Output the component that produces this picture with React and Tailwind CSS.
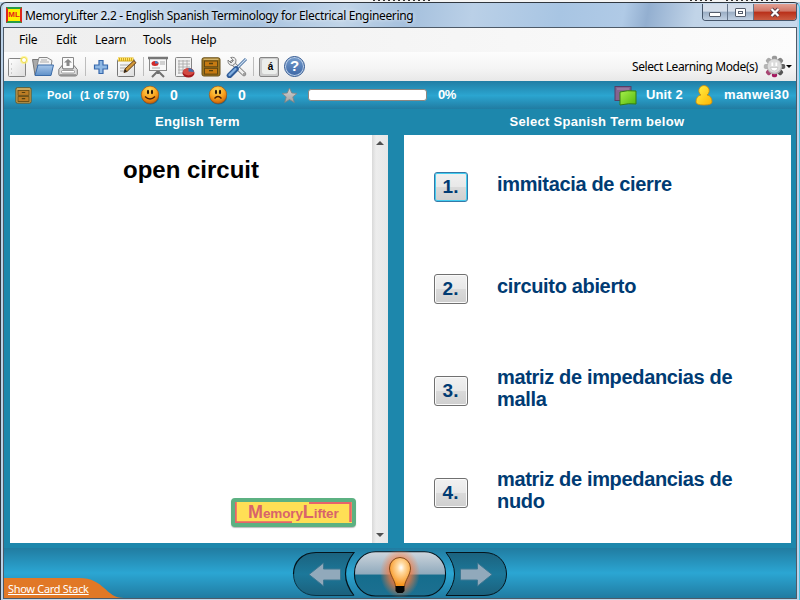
import React from 'react';

const UI = "font-['Noto_Sans',sans-serif]";
const ARIAL = "font-['Liberation_Sans',Arial,sans-serif]";

function Defs() {
  return (
    <svg width="0" height="0" className="absolute" aria-hidden="true">
      <defs>
        <linearGradient id="paper" x1="0" y1="0" x2="1" y2="1"><stop offset="0" stopColor="#fff" /><stop offset="1" stopColor="#ddd" /></linearGradient>
        <linearGradient id="folder" x1="0" y1="0" x2="0" y2="1"><stop offset="0" stopColor="#a9c8ea" /><stop offset="1" stopColor="#5f90c8" /></linearGradient>
        <radialGradient id="face" cx=".45" cy=".25" r=".8"><stop offset="0" stopColor="#ffdf60" /><stop offset=".55" stopColor="#f9a01c" /><stop offset="1" stopColor="#c25a08" /></radialGradient>
        <linearGradient id="star" x1="0" y1="0" x2="0" y2="1"><stop offset="0" stopColor="#d6d6d6" /><stop offset="1" stopColor="#a2a2a2" /></linearGradient>
        <linearGradient id="user" x1="0" y1="0" x2="1" y2="1"><stop offset="0" stopColor="#fff34a" /><stop offset="1" stopColor="#ffb400" /></linearGradient>
        <linearGradient id="green" x1="0" y1="0" x2="1" y2="1"><stop offset="0" stopColor="#a8f04c" /><stop offset="1" stopColor="#53b80c" /></linearGradient>
        <linearGradient id="navSide" x1="0" y1="0" x2="0" y2="1"><stop offset="0" stopColor="#1b627e" /><stop offset=".5" stopColor="#1c789a" /><stop offset="1" stopColor="#1b607c" /></linearGradient>
        <linearGradient id="navMid" x1="0" y1="0" x2="0" y2="1"><stop offset="0" stopColor="#ced6dd" /><stop offset=".51" stopColor="#8fa9bc" /><stop offset=".52" stopColor="#156d8d" /><stop offset="1" stopColor="#1c7091" /></linearGradient>
        <radialGradient id="bulb" cx=".55" cy=".35" r=".6"><stop offset="0" stopColor="#fff" /><stop offset=".3" stopColor="#ffd9a0" /><stop offset="1" stopColor="#f8941d" /></radialGradient>
        <radialGradient id="glow"><stop offset="0" stopColor="#ff7a2a" /><stop offset=".55" stopColor="#ff7a3a" stopOpacity=".7" /><stop offset="1" stopColor="#ff7a3a" stopOpacity="0" /></radialGradient>
      </defs>
    </svg>
  );
}

function Svg({ w, h, className = '', children }) {
  return <svg width={w} height={h} viewBox={`0 0 ${w} ${h}`} className={`block shrink-0 ${className}`}>{children}</svg>;
}

function NewIcon() {
  return (
    <Svg w={22} h={22}>
      <rect x=".5" y="2.500" width="17" height="18" rx="1" fill="url(#paper)" stroke="#858585" />
      <path d="M3 8h1M3 13h1M3 17h1" stroke="#aaa" />
      <circle cx="16" cy="4" r="4" fill="#fff36a" opacity=".65" /><circle cx="16" cy="4" r="2.500" fill="#fff" stroke="#eedb4a" />
    </Svg>
  );
}
function FolderIcon() {
  return (
    <Svg w={24} h={22}>
      <path d="M3 19L.5 3.500h6l2 2H17v13z" fill="#aaa" stroke="#777" />
      <path d="M5 10L7 1.500h8l5 3-1 6z" fill="#f4f4f4" stroke="#888" /><path d="M9 4h6M8 6h9" stroke="#aaa" />
      <path d="M3 19.500L6 9h15.500l-2.500 10.500z" fill="url(#folder)" stroke="#3c6ca8" />
    </Svg>
  );
}
function PrinterIcon() {
  return (
    <Svg w={22} h={22}>
      <path d="M4.500 13V1.500h11V13z" fill="#fafafa" stroke="#8a8a8a" />
      <path d="M10 3l4 3.500h-2.500V10h-3V6.500H6z" fill="#888" />
      <path d="M4 9.500L.8 13.500V18q0 2 2 2h14.500q2 0 2-2v-4.500L16 9.500l-1 3.500H5z" fill="#ddd" stroke="#7c7c7c" />
      <rect x="3.500" y="14.500" width="13" height="2.500" rx="1" fill="#fff" stroke="#888" strokeWidth=".8" />
      <path d="M2 19h16" stroke="#888" strokeWidth="1.500" />
    </Svg>
  );
}
function PlusIcon() {
  return <Svg w={16} h={16}><path d="M6 1.500h4V6h4.500v4H10v4.500H6V10H1.500V6H6z" fill="#8fb8e4" stroke="#3768ac" strokeWidth="1.200" /></Svg>;
}
function NoteIcon() {
  return (
    <Svg w={22} h={23}>
      <rect x="1.500" y="4.500" width="17" height="17" rx="1" fill="url(#paper)" stroke="#777" />
      <path d="M4 10h10M4 13h8M4 16h6" stroke="#aaa" />
      <path d="M2 4.500h15.500" stroke="#d5a91c" strokeWidth="4" /><path d="M2 4h16" stroke="#ffe56a" strokeWidth="3" strokeDasharray="1 1" />
      <path d="M8 17.500l1-3.500 9-8.500 2 2.200-9 8.800z" fill="#d39838" stroke="#5e3b14" /><path d="M8 17.500l1.200-3.200 1.800 1.900z" fill="#222" />
    </Svg>
  );
}
function BoardIcon() {
  return (
    <Svg w={22} h={22}>
      <path d="M11 15l-6 6M11 15l6 6M11 14v4" stroke="#707070" strokeWidth="2" fill="none" />
      <rect x="2.500" y="2.500" width="17" height="12" fill="#f8f8f8" stroke="#888" /><path d="M1 2h20" stroke="#777" strokeWidth="2.500" />
      <ellipse cx="8" cy="7.500" rx="3.500" ry="2.500" fill="#d12a2a" /><path d="M8 7.500V5q3.500 0 3.500 2.500z" fill="#4d80c2" />
      <path d="M13 6h5M13 8h5M5 12h8" stroke="#aaa" />
    </Svg>
  );
}
function ReportIcon() {
  return (
    <Svg w={22} h={22}>
      <rect x="1.500" y="1.500" width="16" height="19" rx="1" fill="#f2f2f2" stroke="#858585" />
      <path d="M4 5h12M4 8h12M4 11h12M4 14h7M4 17h6M5 4v14M9 4v14M13 4v8" stroke="#aaa" strokeWidth=".9" />
      <ellipse cx="14.500" cy="17" rx="6" ry="4.500" fill="#a4181c" /><ellipse cx="14.500" cy="15.700" rx="5.500" ry="3.700" fill="#d34a42" />
      <path d="M14.500 15.500V12q5 .5 5.500 4z" fill="#416fa9" />
    </Svg>
  );
}
function DrawerIcon({ size = 20, muted }) {
  const a = muted ? '#bd7d25' : '#c67a12';
  return (
    <svg width={size} height={size} viewBox="0 0 20 20" className="block shrink-0">
      <rect x="1" y=".8" width="18" height="18.200" rx="1.800" fill={muted ? '#c6a257' : '#9c7420'} stroke="#674f19" />
      <path d="M2.500 2.300h15" stroke="#d3b46c" strokeWidth="1.500" />
      <rect x="3.500" y="4" width="13" height="5.800" fill={a} stroke="#614712" />
      <rect x="3.500" y="11.300" width="13" height="5.800" fill={a} stroke="#614712" />
      <path d="M8 6.500h4M8 13.700h4" stroke="#56400f" strokeWidth="1.300" />
    </svg>
  );
}
function ToolsIcon() {
  return (
    <Svg w={22} h={22}>
      <path d="M6 6.500L18 18" stroke="#777" strokeWidth="4.500" strokeLinecap="round" /><path d="M6 6.500L18 18" stroke="#efefef" strokeWidth="2.700" strokeLinecap="round" />
      <path d="M2 4l3 3 2.500-2.500L4.700 1.500Q9 .5 10 4T6.500 9.500Q1.500 9 2 4z" fill="#eee" stroke="#777" strokeWidth=".9" />
      <circle cx="18" cy="18" r="1" fill="#888" />
      <path d="M20 3L10 13" stroke="#426a9c" strokeWidth="3" /><path d="M20 3L10 13" stroke="#c8dcf1" strokeWidth="1.200" />
      <path d="M10 13l-6.500 6.500" stroke="#2f5c99" strokeWidth="5.500" strokeLinecap="round" /><path d="M9.500 13l-6 6" stroke="#80aee0" strokeWidth="2.300" strokeLinecap="round" />
    </Svg>
  );
}
function Smiley({ sad }) {
  return (
    <Svg w={20} h={20}>
      <ellipse cx="10.500" cy="12" rx="8.500" ry="7.500" fill="#174e66" opacity=".55" />
      <circle cx="10" cy="9.800" r="8.700" fill="url(#face)" stroke="#a14c09" strokeWidth=".6" />
      <ellipse cx="8" cy="7" rx="1.100" ry="2.300" fill="#2a1608" /><ellipse cx="12" cy="7" rx="1.100" ry="2.300" fill="#2a1608" />
      {sad
        ? <path d="M6.500 13.500q3.500-4 7 0" stroke="#4a2008" strokeWidth="1.300" fill="none" />
        : <path d="M5 11.500q5 5 10 0" stroke="#4a2008" strokeWidth="1.400" fill="none" />}
    </Svg>
  );
}
const gearTeeth = [
  [0, '#9a9a9a'], [45, '#858585'], [90, '#606060'], [135, '#555'],
  [180, '#a3195f'], [225, '#a84572'], [270, '#b4b4b4'], [315, '#aaa'],
];
function GearFace() {
  return (
    <Svg w={23} h={23}>
      {gearTeeth.map(([t, color]) => (
        <rect key={t} x="8.900" y=".8" width="5.200" height="6" rx="1.800" transform={`rotate(${t} 11.500 11.500)`} fill={color} />
      ))}
      <circle cx="11.500" cy="11.500" r="7.700" fill="#b3b3b3" /><circle cx="11.300" cy="11" r="6.700" fill="#dcdcdc" />
      <path d="M9.300 7.500v3.500M13.300 7.500v3.500" stroke="#fff" strokeWidth="1.800" />
      <path d="M7.500 12.500h7.500q-.5 3.500-3.700 3.500t-3.800-3.500z" fill="#fff" stroke="#b9b9b9" strokeWidth=".6" />
    </Svg>
  );
}

function Nav() {
  return (
    <Svg w={216} h={47}>
      <path d="M62 1.500H24C10 1.500 1.500 11 1.500 23S10 44.500 24 44.500h38Q45 23 62 1.500z" fill="url(#navSide)" />
      <path d="M1.500 23C1.500 11 10 1.500 24 1.500H62Q45 23 62 44.500" fill="none" stroke="#04141c" strokeWidth="1.200" />
      <path d="M1.500 23C1.500 35 10 44.500 24 44.500h38" fill="none" stroke="#0b3344" />
      <path d="M154 1.500h38C206 1.500 214.500 11 214.500 23S206 44.500 192 44.500h-38Q171 23 154 1.500z" fill="url(#navSide)" stroke="#04141c" strokeWidth="1" />
      <rect x="62.500" y=".7" width="91" height="44.300" rx="21" fill="url(#navMid)" stroke="#04141c" strokeWidth="1.100" />
      <ellipse cx="108" cy="22" rx="20" ry="25" fill="url(#glow)" />
      <path d="M103.500 35.500C103 29 97.500 24 97.500 17a10.500 10.500 0 0 1 21 0c0 7-5.500 12-6 18.500z" fill="url(#bulb)" stroke="#80471c" strokeWidth="1" />
      <path d="M103.500 35h9v5l-2 2h-5l-2-2z" fill="#050505" />
      <path d="M17 23.500L31.500 12v6H48.500v11H31.500v6z" fill="#91a9bb" stroke="#3c7893" />
      <path d="M200 23.500L185.500 12v6H168.500v11h17v6z" fill="#91a9bb" stroke="#3c7893" />
    </Svg>
  );
}

function WindowButtons() {
  return (
    <div className="mt-px ml-auto flex h-[17px] w-[95px] overflow-hidden rounded-b-[4px] border border-t-0 border-[#46566b]">
      <div className="flex w-[25px] items-center justify-center border-r border-[#65758a] bg-[linear-gradient(#d5deea_45%,#9aadc4_50%,#c2d1e3)]"><span className="mt-1 h-[5px] w-[12px] rounded-[1px] border border-[#555d6c] bg-white" /></div>
      <div className="flex w-[26px] items-center justify-center border-r border-[#65758a] bg-[linear-gradient(#d5deea_45%,#9aadc4_50%,#c2d1e3)]"><span className="flex h-[9px] w-[11px] items-center justify-center rounded-[1px] border border-[#555d6c] bg-white"><span className="h-[3px] w-[5px] border border-[#555d6c]" /></span></div>
      <div className="flex flex-1 items-center justify-center bg-[linear-gradient(#e3a194,#d07666_45%,#b92f18_50%,#ca5c42)]">
        <Svg w={12} h={11}><path d="M2.500 2l7 7M9.500 2l-7 7" stroke="#593c45" strokeWidth="4" /><path d="M2.500 2l7 7M9.500 2l-7 7" stroke="#fff" strokeWidth="2.200" /></Svg>
      </div>
    </div>
  );
}

function Logo() {
  return (
    <div className="relative mr-[16px] flex h-[29px] w-[125px] items-baseline self-end rounded-[4px] border-[4px] border-[#5cb182] bg-[#ffdf55] pl-[13px] font-bold text-[#d8646b] shadow-[0_1px_1px_#bbb]">
      <svg width="117" height="21" className="absolute top-0 left-0"><path d="M.5 0V20.500H57M74 .8h41.500V20" fill="none" stroke="#e8636a" strokeWidth="2.500" /></svg>
      <span className="text-[18px] leading-[21px]">M</span>
      <span className="text-[13.5px] leading-[16px] tracking-[-0.15px]">emory</span>
      <span className="text-[18px] leading-[21px]">L</span>
      <span className="text-[13.5px] leading-[16px] tracking-[-0.15px]">ifter</span>
    </div>
  );
}

function Cell({ w, children, className = '' }) {
  return <div className={`flex h-full shrink-0 items-center ${w} ${className}`}>{children}</div>;
}

const answers = [
  { n: '1.', lines: ['immitacia de cierre'], active: true },
  { n: '2.', lines: ['circuito abierto'] },
  { n: '3.', lines: ['matriz de impedancias de', 'malla'] },
  { n: '4.', lines: ['matriz de impedancias de', 'nudo'] },
];

export default function App() {
  return (
    <div className={`flex h-[600px] w-[800px] flex-col overflow-hidden bg-[#bcd2e8] text-black ${UI}`}>
      <Defs />
      <div className="flex h-[2px] shrink-0 bg-[#f4f4f4]">
        <i className="ml-[373px] h-px w-[57px] bg-[repeating-linear-gradient(90deg,#333_0_2px,#eee_2px_5px)]" />
        <i className="ml-[260px] h-px w-[23px] bg-[repeating-linear-gradient(90deg,#333_0_2px,#eee_2px_5px)]" />
        <i className="ml-[13px] h-px w-[54px] bg-[repeating-linear-gradient(90deg,#333_0_2px,#eee_2px_5px)]" />
      </div>
      <div className="flex min-h-0 flex-1 flex-col rounded-t-[6px] border-x border-t border-[#30373f] border-r-[#43c5e8] bg-[#bcd2e8] px-[2px]">
        <header className="flex h-[24px] shrink-0 items-start rounded-t-[5px] bg-[linear-gradient(100deg,#d8e4f1_0%,#cbdcee_13%,#a9c4e0_32%,#c0d4e8_43%,#a5c0dd_51%,#bad0e7_59%,#a8c5e3_70%,#b0cae6_78%,#93afd0_81%,#c1d4e8_87%,#c7d9ec_100%)] pl-[3px]">
          <div className={`mt-[4px] flex h-4 w-4 items-center justify-center border-2 border-t-[#269b46] border-r-[#dd261b] border-b-[#269b46] border-l-[#dd261b] bg-[#fff000] text-[8px] font-bold text-[#e51d18] ${ARIAL}`}>ML</div>
          <div className="ml-[3px] h-[24px] whitespace-nowrap text-[12px] leading-[25px] tracking-[-0.34px] [text-shadow:0_0_4px_#fff]">MemoryLifter 2.2 - English Spanish Terminology for Electrical Engineering</div>
          <WindowButtons />
        </header>
        <div className="flex min-h-0 flex-1 flex-col border border-[#4d5a68]">
          <nav className="flex h-[24px] shrink-0 items-center bg-[linear-gradient(90deg,#eeeeee,#fcfcfc)] pl-[15px] text-[12px] tracking-[-0.2px]">
            <Cell w="w-[37px]">File</Cell><Cell w="w-[39px]">Edit</Cell><Cell w="w-[48px]">Learn</Cell><Cell w="w-[48px]">Tools</Cell><Cell w="w-[40px]">Help</Cell>
          </nav>
          <div className="flex h-[29px] shrink-0 items-center bg-[linear-gradient(#fdfdfd,#f5f5f5_55%,#e8e8e8)] pl-[4px]">
            <Cell w="w-[24px]"><NewIcon /></Cell>
            <Cell w="w-[26px]"><FolderIcon /></Cell>
            <Cell w="w-[27px]"><PrinterIcon /></Cell>
            <Cell w="w-[8px]"><i className="h-[19px] w-px bg-[#bdbdbd]" /></Cell>
            <Cell w="w-[23px]"><PlusIcon /></Cell>
            <Cell w="w-[27px]"><NoteIcon /></Cell>
            <Cell w="w-[4px]"><i className="h-[19px] w-px bg-[#bdbdbd]" /></Cell>
            <Cell w="w-[27px]"><BoardIcon /></Cell>
            <Cell w="w-[27px]"><ReportIcon /></Cell>
            <Cell w="w-[25px]"><DrawerIcon /></Cell>
            <Cell w="w-[27px]"><ToolsIcon /></Cell>
            <Cell w="w-[6px]"><i className="h-[19px] w-px bg-[#bdbdbd]" /></Cell>
            <Cell w="w-[25px]"><span className="flex h-[20px] w-[20px] items-center justify-center rounded-[2px] border border-[#858585] bg-[#ccc]"><span className={`flex h-[15px] w-[15px] items-center justify-center rounded-[2px] bg-[#eceeec] pl-[3px] text-[10px] font-bold ${ARIAL}`}>á</span></span></Cell>
            <Cell w="w-[21px]"><span className="flex h-[21px] w-[21px] items-center justify-center rounded-full border border-[#2f5790] bg-[#b7cbe6]"><span className={`flex h-[17px] w-[17px] items-center justify-center rounded-full bg-[linear-gradient(#7299ca,#3f69a8)] text-[15px] font-bold text-white ${ARIAL}`}>?</span></span></Cell>
            <div className="ml-auto flex items-center pr-[4px]">
              <span className="w-[131px] whitespace-nowrap text-[12px] tracking-[-0.4px]">Select Learning Mode(s)</span>
              <GearFace />
              <span className="h-0 w-0 border-x-[3px] border-t-[3px] border-x-transparent border-t-black" />
            </div>
          </div>
          <div className={`flex h-[28px] shrink-0 items-center bg-[linear-gradient(#217da4,#2ba5d0_52%,#217ca2)] pl-[11px] text-[12px] font-bold text-white ${ARIAL}`}>
            <Cell w="w-[32px]"><DrawerIcon size={17} muted /></Cell>
            <Cell w="w-[33px]" className="text-[11px] tracking-[0.2px]">Pool</Cell>
            <Cell w="w-[60px]" className="text-[11px] tracking-[0.1px] whitespace-nowrap">(1 of 570)</Cell>
            <Cell w="w-[30px]"><Smiley /></Cell>
            <Cell w="w-[38px]" className="text-[14px]">0</Cell>
            <Cell w="w-[30px]"><Smiley sad /></Cell>
            <Cell w="w-[43px]" className="text-[14px]">0</Cell>
            <Cell w="w-[27px]"><Svg w={17} h={17}><path d="M8.500 1l2.200 5 5.300.4-4.200 3.500 1.500 5.600-4.800-3-4.800 3 1.500-5.600L1 6.400 6.300 6z" fill="url(#star)" stroke="#828282" strokeWidth=".8" /></Svg></Cell>
            <Cell w="w-[130px]"><div className="h-[12px] w-[119px] rounded-[3px] border border-[#8e8780] bg-white" /></Cell>
            <Cell w="w-[30px]" className="text-[13px] tracking-[-0.6px]">0%</Cell>
            <div className="ml-auto flex items-center">
              <Cell w="w-[32px]"><Svg w={23} h={21}><rect x="1" y="1.500" width="16" height="14" fill="#85648f" stroke="#573e66" /><path d="M3 4h12" stroke="#a78bae" /><path d="M6 7q7-2 16-1v13q-7-1-16 1z" fill="url(#green)" stroke="#347c11" /></Svg></Cell>
              <Cell w="w-[49px]" className="text-[13px] tracking-[0.1px] whitespace-nowrap">Unit 2</Cell>
              <Cell w="w-[29px]"><Svg w={18} h={21}><path d="M1 17q0-6 5-7a5.200 5.200 0 1 1 6 0q5 1 5 7 0 3-8 3t-8-3z" fill="url(#user)" stroke="#d58c00" strokeWidth=".8" /></Svg></Cell>
              <Cell w="w-[72px]" className="text-[13px] tracking-[0.4px]">manwei30</Cell>
            </div>
          </div>
          <main className="flex min-h-0 flex-1 flex-col bg-[#1d87ac] pl-[6px] pr-[5px]">
            <div className={`flex h-[26px] shrink-0 items-center text-[13px] font-bold tracking-[0.3px] text-white ${ARIAL}`}>
              <div className="flex w-[375px] justify-center">English Term</div>
              <div className="ml-[19px] flex w-[386px] justify-center">Select Spanish Term below</div>
            </div>
            <div className="flex h-[408px] shrink-0">
              <section className={`flex w-[378px] bg-white ${ARIAL}`}>
                <div className="flex flex-1 flex-col items-center justify-between pb-[16px]">
                  <h1 className="mt-[21px] text-[24px] leading-[28px] font-bold">open circuit</h1>
                  <Logo />
                </div>
                <div className="flex w-[16px] flex-col items-center justify-between bg-[linear-gradient(90deg,#d9d9d9,#ededed_25%,#e7e7e7)] pt-[6px] pb-[6px]">
                  <Svg w={8} h={4}><path d="M0 4L4 0l4 4z" fill="#505050" /></Svg><Svg w={8} h={4}><path d="M0 0l4 4 4-4z" fill="#505050" /></Svg>
                </div>
              </section>
              <section className={`ml-[16px] flex w-[387px] flex-col bg-white text-[#003b73] ${ARIAL}`}>
                {answers.map((a) => (
                  <div key={a.n} className="flex h-[102px] pl-[30px]">
                    <div className={`mt-[37px] flex h-[30px] w-[34px] items-center justify-center rounded-[3px] border bg-[linear-gradient(#f1f1f1,#e8e8e8_49%,#dadada_51%,#cfcfcf)] pr-px text-[19px] font-bold ${a.active ? 'border-[#3579a8] shadow-[inset_0_0_0_1px_#43cdf0]' : 'border-[#707070] shadow-[inset_0_0_0_1px_#fafafa]'}`}>{a.n}</div>
                    <div className="ml-[29px] flex h-full flex-col justify-center pb-[4px] text-[20px] leading-[22px] font-bold tracking-[-0.34px]">
                      {a.lines.map((l) => <div key={l} className="whitespace-nowrap">{l}</div>)}
                    </div>
                  </div>
                ))}
              </section>
            </div>
          </main>
          <footer className="flex h-[50px] shrink-0 items-end bg-[linear-gradient(#217ca1,#2ba6d3_50%,#217ba1)]">
            <div className="relative flex h-[21px] w-[288px] shrink-0 items-end">
              <svg width="121" height="21" className="absolute bottom-0 left-0"><path d="M0 1H75C101 1 101 21 120 21H0z" fill="#e17826" /></svg>
              <span className="relative mb-px ml-[4px] w-[90px] text-[11px] leading-[17px] tracking-[-0.3px] whitespace-nowrap text-white underline">Show Card Stack</span>
            </div>
            <Nav />
          </footer>
        </div>
        <div className="h-px shrink-0 bg-[#c6d7e8]" />
      </div>
    </div>
  );
}
